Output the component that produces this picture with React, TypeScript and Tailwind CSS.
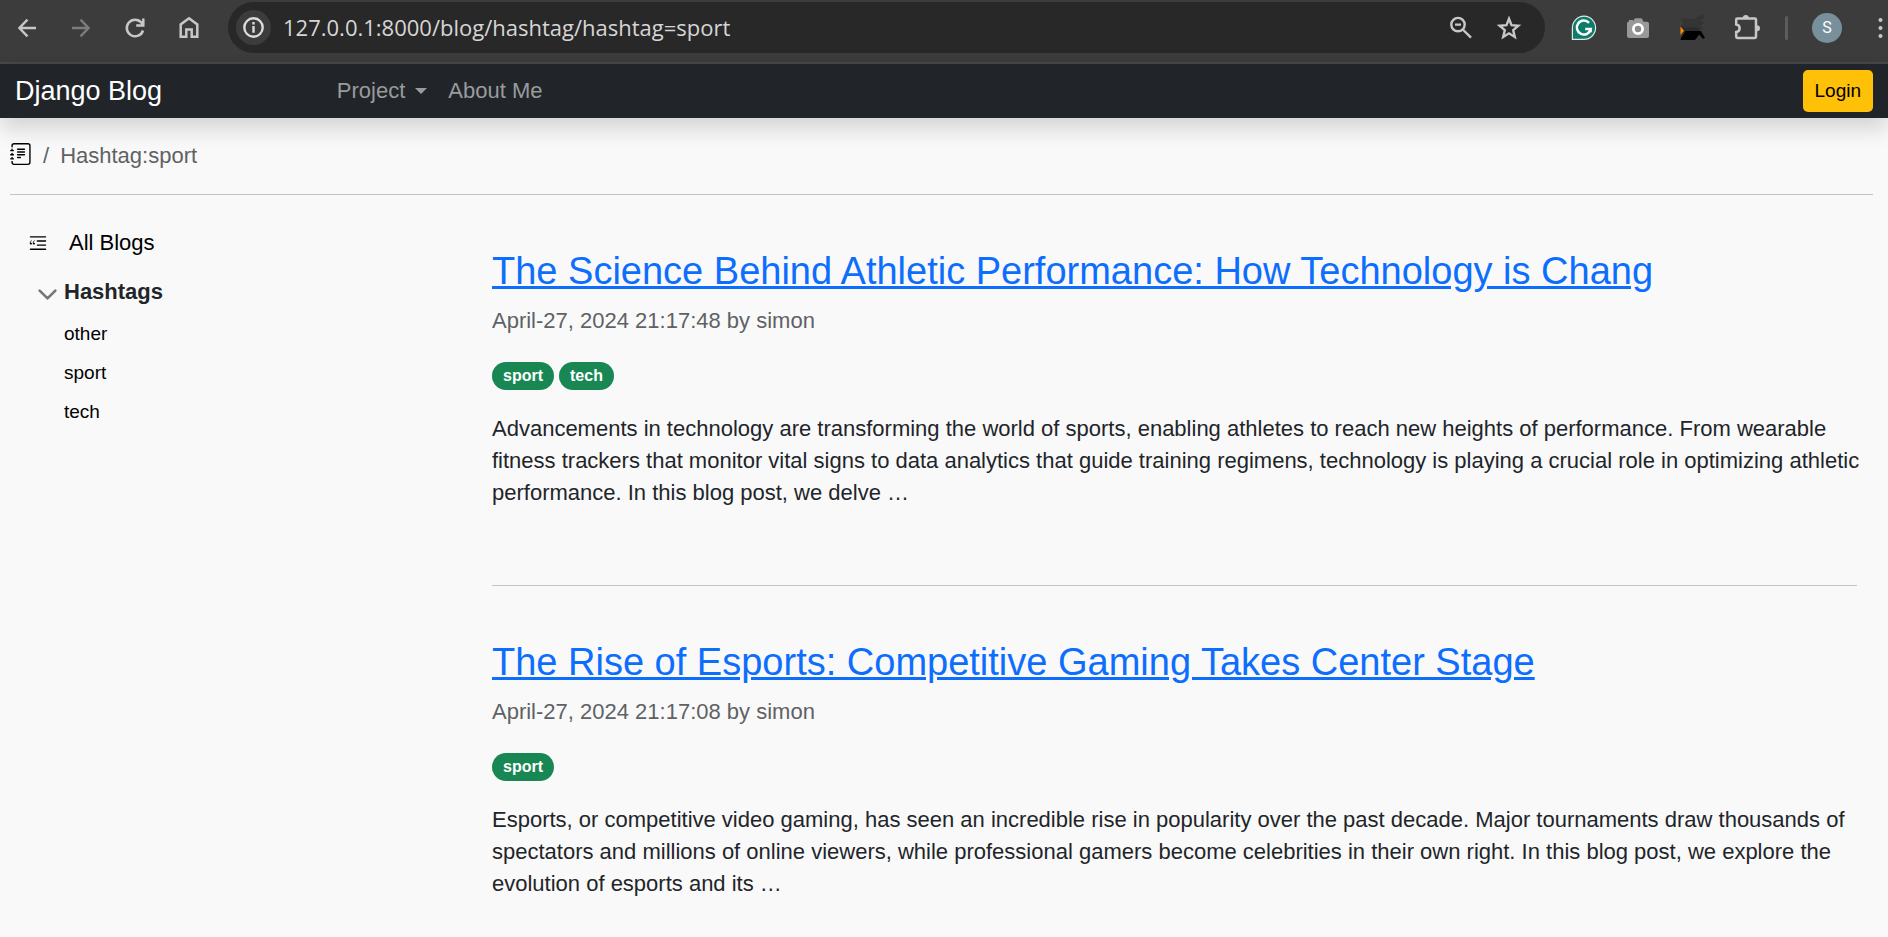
import type { ReactNode } from "react";
import { BsBlockquoteLeft, BsChevronDown, BsJournalText } from "react-icons/bs";

type Post = {
  title: string;
  meta: string;
  tags: string[];
  excerpt: string;
};

const posts: Post[] = [
  {
    title: "The Science Behind Athletic Performance: How Technology is Chang",
    meta: "April-27, 2024 21:17:48 by simon",
    tags: ["sport", "tech"],
    excerpt:
      "Advancements in technology are transforming the world of sports, enabling athletes to reach new heights of performance. From wearable fitness trackers that monitor vital signs to data analytics that guide training regimens, technology is playing a crucial role in optimizing athletic performance. In this blog post, we delve …",
  },
  {
    title: "The Rise of Esports: Competitive Gaming Takes Center Stage",
    meta: "April-27, 2024 21:17:08 by simon",
    tags: ["sport"],
    excerpt:
      "Esports, or competitive video gaming, has seen an incredible rise in popularity over the past decade. Major tournaments draw thousands of spectators and millions of online viewers, while professional gamers become celebrities in their own right. In this blog post, we explore the evolution of esports and its …",
  },
];

const hashtags = ["other", "sport", "tech"];

function ToolButton({ label, children }: { label: string; children: ReactNode }) {
  return (
    <button type="button" aria-label={label} className="flex size-[30px] shrink-0 items-center justify-center">
      {children}
    </button>
  );
}

function BrowserBar() {
  return (
    <div className="flex h-16 items-center border-b-2 border-[#474747] bg-[#3c3c3c] pb-[7px]">
      <div className="flex gap-6 pl-3 text-[#c7c7c7]">
        <ToolButton label="Back">
          <svg width="30" height="30" viewBox="0 0 30 30" fill="none" stroke="currentColor" strokeWidth="2.4">
            <path d="M24 15H8M15.5 6.7 7.4 15l8.1 8.3" />
          </svg>
        </ToolButton>
        <ToolButton label="Forward">
          <svg width="30" height="30" viewBox="0 0 30 30" fill="none" stroke="#7c7c7c" strokeWidth="2.4">
            <path d="M6 15h16M14.5 6.7l8.1 8.3-8.1 8.3" />
          </svg>
        </ToolButton>
        <ToolButton label="Reload">
          <svg width="30" height="30" viewBox="0 0 30 30" fill="none" stroke="currentColor" strokeWidth="2.5">
            <path d="M23 17.5A8.3 8.3 0 1 1 21.5 9.7l1.6 2M23.3 5.5v7.1h-7.1" />
          </svg>
        </ToolButton>
        <ToolButton label="Home">
          <svg width="30" height="30" viewBox="0 0 30 30" fill="none" stroke="currentColor" strokeWidth="2.5">
            <path d="M6.7 23.8V11.4L15 5.2l8.3 6.2v12.4h-5.6v-7.4h-5.4v7.4z" />
          </svg>
        </ToolButton>
      </div>

      <div className="ml-6 flex h-[51px] min-w-0 flex-1 items-center rounded-full bg-[#282828] pl-2 pr-[21px]">
        <button
          type="button"
          aria-label="View site information"
          className="flex size-[35px] shrink-0 items-center justify-center rounded-full bg-[#3c3c3c]"
        >
          <svg width="23" height="23" viewBox="0 0 23 23" fill="none" stroke="#dcdcdc" strokeWidth="2.4">
            <circle cx="11.5" cy="11.5" r="9.2" />
            <path d="M11.5 10v6.8M11.5 6v2.5" />
          </svg>
        </button>
        <input
          aria-label="Address"
          defaultValue="127.0.0.1:8000/blog/hashtag/hashtag=sport"
          className="ml-3 min-w-0 flex-1 bg-transparent font-['Open_Sans',sans-serif] text-[22px] text-[#d6d6d6] outline-none"
        />
        <div className="flex gap-[18px] text-[#c7c7c7]">
          <ToolButton label="Zoom out">
            <svg width="30" height="30" viewBox="0 0 30 30" fill="none" stroke="currentColor" strokeWidth="2.4">
              <circle cx="12" cy="11.6" r="6.7" />
              <path d="M9 11.6h6M16.8 16.5l8.2 8.1" />
            </svg>
          </ToolButton>
          <ToolButton label="Bookmark this page">
            <svg width="30" height="30" viewBox="0 0 30 30" fill="none" stroke="currentColor" strokeWidth="2.4">
              <path d="m15 5.8 2.5 6.3 6.9.6-5.2 4.5 1.6 6.7-5.8-3.6-5.8 3.6 1.6-6.7-5.2-4.5 6.9-.6z" />
            </svg>
          </ToolButton>
        </div>
      </div>

      <div className="flex items-center gap-6 pl-6 text-[#c7c7c7]">
        <ToolButton label="Grammarly">
          <svg width="30" height="30" viewBox="0 0 30 30" fill="none">
            <path d="M15 2.6a12.2 12.2 0 1 1 0 24.4H2.8V14.8A12.2 12.2 0 0 1 15 2.6z" fill="#e4e9e7" />
            <path d="M15 3.8a11 11 0 1 1 0 22H4V14.8a11 11 0 0 1 11-11z" fill="#0b7d6a" />
            <path d="M20 9.8a7 7 0 1 0 1.7 6.2h-5.5" stroke="#fff" strokeWidth="2.5" />
            <path d="M18.5 15.8h3.4v3.5" stroke="#fff" strokeWidth="1.8" />
          </svg>
        </ToolButton>
        <ToolButton label="Screenshot">
          <svg width="30" height="30" viewBox="0 0 30 30">
            <path
              d="M6 8.5V7h4v1.5L11.4 6q.5-.8 1.4-.8h5q.9 0 1.4.8l1.3 2.7H24q2 0 2 2V23q0 2-2 2H6q-2 0-2-2V10.5q0-2 2-2z"
              fill="#999"
            />
            <circle cx="15" cy="16" r="4.6" fill="#8a8a8a" stroke="#fff" strokeWidth="2.8" />
          </svg>
        </ToolButton>
        <ToolButton label="Open box">
          <svg width="30" height="30" viewBox="0 0 30 30">
            <path d="M4.500 6.500q4-2 8-.5t8-2 7-.5q-1 3-5 3.500l4.500 2.500-3 3.500 2 3-18 1.500-4.500-4 3-3-1-2.500z" fill="#343434" />
            <path d="M4 12.500 8 15l10-1 5 2-1 2-14 .5-3 3z" fill="#2b2b2b" />
            <path d="m3.500 13.500 3.500 4.200-3.500 4.300z" fill="#ff8a00" />
            <path d="m3.500 27 .5-2 4.500-7h15.500l4 7-2.200.8-3.600-4.200-4.200 5.400z" fill="#000" />
          </svg>
        </ToolButton>
        <ToolButton label="Extensions">
          <svg width="30" height="30" viewBox="0 0 30 30">
            <path d="M11.800 5a3 3 0 0 1 6 0zM26 12.300a3 3 0 0 1 0 6z" fill="currentColor" />
            <path
              d="M6.400 5.500h17.400q1.200 0 1.200 1.200v17q0 1.200-1.200 1.200H6.400q-1.200 0-1.200-1.200v-4.700q3.400-.5 3.400-3.800t-3.400-3.800v-4.700q0-1.200 1.200-1.200z"
              fill="none"
              stroke="currentColor"
              strokeWidth="2.5"
            />
          </svg>
        </ToolButton>
        <div className="h-6 w-[3px] rounded-full bg-[#5c5c5c]" />
        <button
          type="button"
          aria-label="Profile"
          className="flex size-[30px] items-center justify-center rounded-full bg-[#78909c] font-[Roboto,sans-serif] text-base text-white"
        >
          S
        </button>
        <button type="button" aria-label="Menu" className="ml-3 flex w-[10px] shrink-0 justify-start">
          <svg width="5" height="22" viewBox="0 0 5 22" fill="currentColor">
            <circle cx="2.5" cy="3" r="2" />
            <circle cx="2.5" cy="11" r="2" />
            <circle cx="2.5" cy="19" r="2" />
          </svg>
        </button>
      </div>
    </div>
  );
}

function SiteNav() {
  return (
    <nav className="relative flex h-[54px] items-center bg-[#212529] px-[15px] shadow-[0_11px_21px_rgba(0,0,0,0.15)]">
      <a href="#home" className="w-[17%] text-[27px] leading-8 text-white">
        Django Blog
      </a>
      <div className="flex items-center gap-[21px] pl-[6px] text-[22px] leading-8 text-[#999b9d]">
        <button type="button" className="flex items-center gap-[10px]">
          Project
          <svg width="12" height="6" viewBox="0 0 12 6" fill="currentColor">
            <path d="M0 0h12L6 6z" />
          </svg>
        </button>
        <a href="#about">About Me</a>
      </div>
      <button
        type="button"
        className="ml-auto h-[42px] rounded-[5px] bg-[#ffc107] px-3 text-[19px] leading-7 text-black"
      >
        Login
      </button>
    </nav>
  );
}

function Sidebar() {
  return (
    <aside className="w-1/4 shrink-0 pt-8 text-black">
      <a href="#all" className="flex items-center pl-[27px] text-[22px] leading-8">
        <BsBlockquoteLeft size={22} className="mr-5" />
        All Blogs
      </a>
      <button type="button" className="mt-[17px] flex items-center pl-[37px] text-[22px] leading-8 font-bold text-[#212529]">
        <BsChevronDown size={21} className="mt-1 mr-[6px] text-[#777]" strokeWidth={1} />
        Hashtags
      </button>
      <ul className="mt-[6px] pl-16 text-[19px] leading-[39px]">
        {hashtags.map((tag) => (
          <li key={tag}>
            <a href={`#${tag}`}>{tag}</a>
          </li>
        ))}
      </ul>
    </aside>
  );
}

function PostCard({ post }: { post: Post }) {
  return (
    <article className="border-b border-[#c3c4c4] pt-[54px] pb-[76px]">
      <h3 className="text-[38px] leading-[44px] text-[#0d6efd]">
        <a href="#post" className="underline">
          {post.title}
        </a>
      </h3>
      <p className="mt-3 text-[22px] leading-8 text-[#5f6265]">{post.meta}</p>
      <div className="mt-[25px] flex gap-[5px]">
        {post.tags.map((tag) => (
          <a
            key={tag}
            href={`#${tag}`}
            className="h-7 rounded-full bg-[#198754] px-[11px] text-base leading-7 font-bold text-white"
          >
            {tag}
          </a>
        ))}
      </div>
      <p className="mt-[23px] -mr-2 text-[22px] leading-8 text-[#212529]">{post.excerpt}</p>
    </article>
  );
}

export default function App() {
  return (
    <div className="h-screen overflow-hidden bg-[#f9f9f9] font-['Liberation_Sans',Arial,sans-serif]">
      <BrowserBar />
      <SiteNav />
      <nav
        aria-label="Breadcrumb"
        className="mr-[15px] ml-[10px] flex items-center border-b border-[#c3c4c4] py-[22px] text-[22px] leading-8 text-[#5f6265]"
      >
        <a href="#blog" aria-label="Blog" className="pb-1 text-black">
          <BsJournalText size={22} />
        </a>
        <span className="px-[11px]">/</span>
        <span>Hashtag:sport</span>
      </nav>
      <div className="flex">
        <Sidebar />
        <main className="min-w-0 flex-1 pr-[31px] pl-5">
          {posts.map((post) => (
            <PostCard key={post.title} post={post} />
          ))}
        </main>
      </div>
    </div>
  );
}
